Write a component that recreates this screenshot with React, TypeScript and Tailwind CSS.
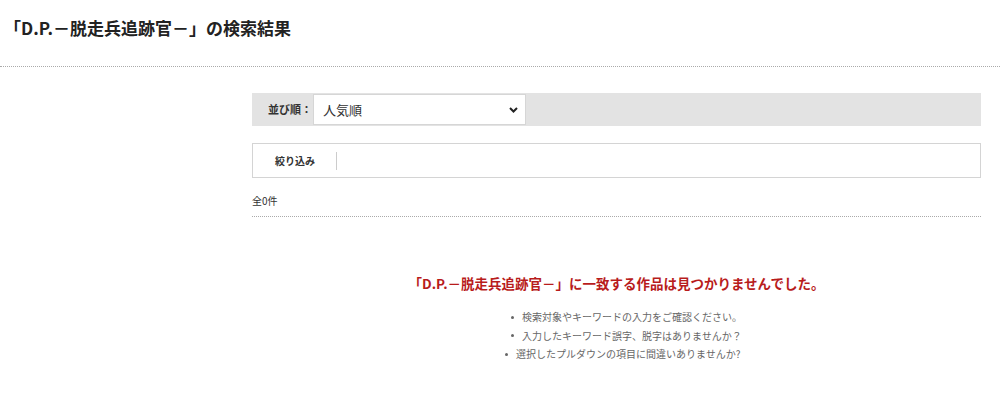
import React from 'react';

const font = { fontFamily: '"Noto Sans CJK JP", "Noto Sans", sans-serif' };

export default function App() {
  const hints = [
    '検索対象やキーワードの入力をご確認ください。',
    '入力したキーワード誤字、脱字はありませんか？',
  ];

  return (
    <div className="min-h-[408px] bg-white text-[#333]" style={font}>
      {/* Title */}
      <div className="h-[67px] border-b border-dotted border-[#aaa] pl-[4px] pt-[15px]">
        <h1 className="text-[17px] font-bold leading-[26px] text-[#222]">
          「D.P.－脱走兵追跡官－」の検索結果
        </h1>
      </div>

      <div className="ml-[252px] w-[729px] pt-[26px]">
        {/* Sort bar */}
        <div className="flex h-[33px] items-center bg-[#e3e3e3]">
          <span className="w-[61px] pl-[16px] text-[11px] font-bold text-[#333]">並び順：</span>
          <div className="relative h-[31px] w-[213px] border border-[#d6d6d6] bg-white">
            <select className="h-full w-full appearance-none bg-transparent pl-[9px] text-[13px] text-[#333] outline-none" style={font}>
              <option>人気順</option>
            </select>
            <svg className="pointer-events-none absolute right-[7px] top-[12px]" width="9" height="6" viewBox="0 0 9 6">
              <path d="M1 1l3.5 3.5L8 1" fill="none" stroke="#222" strokeWidth="2" />
            </svg>
          </div>
        </div>

        {/* Filter */}
        <div className="mt-[17px] flex h-[35px] items-center border border-[#d4d4d4]">
          <span className="w-[84px] border-r border-[#ccc] pl-[22px] text-[10px] font-bold leading-[18px] text-[#333]">
            絞り込み
          </span>
        </div>

        <p className="mt-[15px] text-[10px] leading-[16px] text-[#333]">全0件</p>
        <div className="mt-[7px] border-b border-dotted border-[#aaa]" />

        {/* Empty result */}
        <div className="pt-[56px] text-center">
          <p className="text-[13.5px] font-bold leading-[20px] text-[#b81c1c]">
            「D.P.－脱走兵追跡官－」に一致する作品は見つかりませんでした。
          </p>
        </div>
        <ul className="ml-[259px] mt-[15px] text-[10px] leading-[18.5px] text-[#666]">
          {hints.map((h) => (
            <li key={h} className="flex items-center gap-[8px]">
              <span className="h-[3px] w-[3px] rounded-full bg-[#666]" />
              {h}
            </li>
          ))}
          <li className="-ml-[6px] flex items-center gap-[8px]">
            <span className="h-[3px] w-[3px] rounded-full bg-[#666]" />
            選択したプルダウンの項目に間違いありませんか?
          </li>
        </ul>
      </div>
    </div>
  );
}
